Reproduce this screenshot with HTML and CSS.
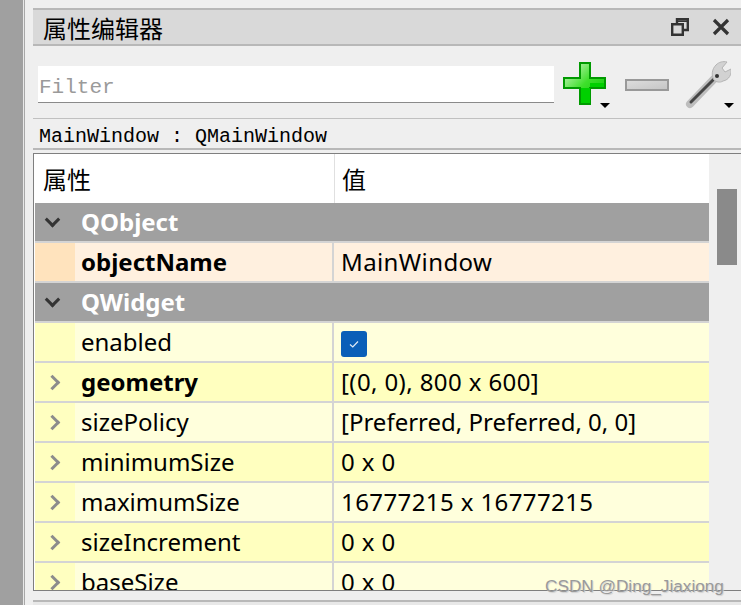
FILE: index.html
```html
<!DOCTYPE html>
<html lang="zh-CN">
<head>
    <meta charset="UTF-8">
    <title>属性编辑器</title>
    <link rel="stylesheet" href="styles.css">
</head>
<body>
  <div class="side-strip"></div>
  <div class="dock">
    <div class="title-bar">
        <span class="title-text">属性编辑器</span>
        <div class="title-buttons">
            <svg width="18" height="18" viewBox="0 0 18 18" fill="none" stroke="#333" stroke-width="2.4"><path d="M1.2 6.2h10.6v10.6H1.2z"/><path d="M6 6V1.2h10.8V12H12"/><path d="M6 3.2h10.8" stroke-width="1.6"/></svg>
            <svg width="18" height="18" viewBox="0 0 18 18" fill="none" stroke="#333" stroke-width="3.2"><path d="M2 2l14 14M16 2L2 16"/></svg>
        </div>
    </div>
    <div class="tool-row">
        <div class="filter">Filter</div>
        <div class="tool-buttons">
            <div class="tool-btn plus-btn">
                <svg width="46" height="46" viewBox="0 0 46 46">
                    <defs>
                        <linearGradient id="plusFill" x1="0" y1="0" x2="1" y2="1">
                            <stop offset="0" stop-color="#e2f8da"/>
                            <stop offset="0.5" stop-color="#3fe02c"/>
                            <stop offset="1" stop-color="#00c400"/>
                        </linearGradient>
                    </defs>
                    <path d="M17 1h10v15h15v10H27v16H17V26H1V16h16z" fill="url(#plusFill)" stroke="#009a00" stroke-width="2"/>
                    <path d="M27 21h14v4H27v16H18V26h9z" fill="#00d000"/>
                </svg>
                <span class="drop-arrow"></span>
            </div>
            <div class="tool-btn minus-btn">
                <svg width="44" height="12" viewBox="0 0 44 12">
                    <defs>
                        <linearGradient id="minusFill" x1="0" y1="0" x2="1" y2="1">
                            <stop offset="0" stop-color="#dedede"/>
                            <stop offset="1" stop-color="#c4c4c4"/>
                        </linearGradient>
                    </defs>
                    <rect x="1" y="1" width="42" height="10" fill="url(#minusFill)" stroke="#999" stroke-width="2"/>
                </svg>
            </div>
            <div class="tool-btn wrench-btn">
                <svg width="46" height="48" viewBox="0 0 46 48">
                    <path d="M5 43L29 18" stroke="#bdbdbd" stroke-width="8" stroke-linecap="round"/>
                    <path d="M6 41L29 18" stroke="#454545" stroke-width="3" stroke-linecap="round"/>
                    <path d="M31 4c3-3 7-4 11-3l-5 6 3 4 6-3c1 5-2 11-8 12-3 2-7 1-9-1-3-5-2-11 2-15z" fill="#d2d2d2" stroke="#b4b4b4"/>
                    <circle cx="32" cy="15" r="2" fill="#333"/>
                </svg>
                <span class="drop-arrow"></span>
            </div>
        </div>
    </div>
    <div class="object-label">MainWindow : QMainWindow</div>
    <div class="prop-area">
      <div class="prop-table">
        <div class="prop-head">
            <div class="head-name">属性</div>
            <div class="head-value">值</div>
        </div>
        <div class="group-row"><span class="chev-down"></span>QObject</div>
        <div class="row row-orange">
            <div class="indent"></div>
            <div class="name bold">objectName</div>
            <div class="value spaced">MainWindow</div>
        </div>
        <div class="group-row"><span class="chev-down"></span>QWidget</div>
        <div class="row row-light">
            <div class="indent"></div>
            <div class="name">enabled</div>
            <div class="value"><span class="checkbox"><svg width="12" height="12" viewBox="0 0 12 12" fill="none" stroke="#dfeaf6" stroke-width="1.2"><path d="M2 6.5l2.8 2.5L10 3.5"/></svg></span></div>
        </div>
        <div class="row row-dark">
            <div class="indent"><span class="chev-right"></span></div>
            <div class="name bold">geometry</div>
            <div class="value spaced">[(0, 0), 800 x 600]</div>
        </div>
        <div class="row row-light">
            <div class="indent"><span class="chev-right"></span></div>
            <div class="name">sizePolicy</div>
            <div class="value">[Preferred, Preferred, 0, 0]</div>
        </div>
        <div class="row row-dark">
            <div class="indent"><span class="chev-right"></span></div>
            <div class="name">minimumSize</div>
            <div class="value spaced">0 x 0</div>
        </div>
        <div class="row row-light">
            <div class="indent"><span class="chev-right"></span></div>
            <div class="name">maximumSize</div>
            <div class="value spaced">16777215 x 16777215</div>
        </div>
        <div class="row row-dark">
            <div class="indent"><span class="chev-right"></span></div>
            <div class="name">sizeIncrement</div>
            <div class="value spaced">0 x 0</div>
        </div>
        <div class="row row-light">
            <div class="indent"><span class="chev-right"></span></div>
            <div class="name">baseSize</div>
            <div class="value spaced">0 x 0</div>
        </div>
      </div>
      <div class="scrollbar"><div class="scroll-thumb"></div></div>
    </div>
    <div class="bottom-bar"></div>
  </div>
  <div class="watermark">CSDN @Ding_Jiaxiong</div>
</body>
</html>
```

FILE: styles.css
```css
html, body {
    height: 100%;
}
body {
    margin: 0;
    display: flex;
    overflow: hidden;
    background-color: #efefef;
    color: #000;
    font-family: "Noto Sans", "Noto Sans CJK SC", sans-serif;
    font-size: 24px;
}
.side-strip {
    width: 23px;
    flex-shrink: 0;
    background-color: #a0a0a0;
    border-right: 1px solid #e8e8e8;
    box-shadow: 1px 0 0 #a8a8a8;
}
.dock {
    flex: 1;
    display: flex;
    flex-direction: column;
    padding: 8px 0 0 9px;
    min-width: 0;
}
.title-bar {
    height: 34px;
    flex-shrink: 0;
    display: flex;
    align-items: center;
    justify-content: space-between;
    background-color: #d9d9d9;
    border-top: 2px solid #b8b8b8;
    border-bottom: 2px solid #b8b8b8;
    padding-left: 10px;
}
.title-text {
    font-family: "Noto Sans CJK SC", sans-serif;
    font-size: 24px;
}
.title-buttons {
    display: flex;
    gap: 23px;
    padding-right: 11px;
}
.tool-row {
    height: 73px;
    flex-shrink: 0;
    display: flex;
    align-items: center;
    padding: 5px 0 0 5px;
    border-bottom: 1px solid #c0c0c0;
    box-sizing: border-box;
}
.filter {
    width: 516px;
    height: 37px;
    box-sizing: border-box;
    background-color: #fff;
    border-bottom: 1px solid #8a8a8a;
    color: #9a9a9a;
    font-family: "Liberation Mono", monospace;
    font-size: 21px;
    line-height: 43px;
    padding-left: 1px;
}
.tool-buttons {
    display: flex;
    align-items: center;
    margin-left: 9px;
}
.tool-btn {
    position: relative;
    display: flex;
}
.minus-btn {
    margin: 0 16px;
}
.drop-arrow {
    position: absolute;
    right: -1px;
    bottom: 0;
    border-left: 5px solid transparent;
    border-right: 5px solid transparent;
    border-top: 5px solid #000;
}
.wrench-btn .drop-arrow {
    right: -3px;
    bottom: 1px;
}
.object-label {
    height: 31px;
    flex-shrink: 0;
    box-sizing: border-box;
    border-bottom: 2px solid #b8b8b8;
    font-family: "Liberation Mono", monospace;
    font-size: 20px;
    line-height: 35px;
    padding-left: 6px;
}
.prop-area {
    height: 438px;
    margin-top: 3px;
    flex-shrink: 0;
    display: flex;
    border-top: 1px solid #7f7f7f;
    border-bottom: 1px solid #7f7f7f;
    box-sizing: border-box;
    overflow: hidden;
}
.prop-table {
    width: 676px;
    flex-shrink: 0;
    box-sizing: border-box;
    border-left: 1px solid #7f7f7f;
    padding-left: 1px;
    background-color: #fff;
    overflow: hidden;
}
.prop-head {
    height: 49px;
    display: flex;
    font-family: "Noto Sans CJK SC", sans-serif;
    line-height: 50px;
}
.head-name {
    width: 300px;
    padding-left: 8px;
    box-sizing: border-box;
    border-right: 1px solid #e0e0e0;
}
.head-value {
    padding-left: 7px;
}
.group-row {
    height: 38px;
    display: flex;
    align-items: center;
    background-color: #a0a0a0;
    border-bottom: 2px solid #d4d4d4;
    color: #fff;
    font-weight: 700;
    line-height: 38px;
}
.chev-down, .chev-right {
    display: block;
    box-sizing: border-box;
    width: 11px;
    height: 11px;
}
.chev-down {
    border-right: 3px solid #333;
    border-bottom: 3px solid #333;
    transform: rotate(45deg) translate(-2px, -2px);
    margin: 0 23px 0 12px;
}
.chev-right {
    border-top: 3px solid #8c8c8c;
    border-right: 3px solid #8c8c8c;
    transform: rotate(45deg);
    margin-left: 12px;
}
.row {
    height: 38px;
    display: flex;
    border-bottom: 2px solid #d4d4d4;
    line-height: 38px;
}
.indent {
    width: 40px;
    flex-shrink: 0;
    display: flex;
    align-items: center;
}
.name {
    width: 259px;
    flex-shrink: 0;
    padding-left: 6px;
    box-sizing: border-box;
    border-right: 2px solid #d4d4d4;
}
.value {
    flex: 1;
    padding-left: 7px;
}
.spaced {
    letter-spacing: 0.4px;
}
.bold {
    font-weight: 700;
}
.row-orange {
    background-color: #fff0df;
}
.row-orange .indent {
    background-color: #ffe3bd;
}
.row-light {
    background-color: #ffffdc;
}
.row-light .indent {
    background-color: #ffffc0;
}
.row-dark, .row-dark .indent {
    background-color: #ffffbf;
}
.checkbox {
    display: inline-flex;
    align-items: center;
    justify-content: center;
    width: 26px;
    height: 26px;
    border-radius: 3px;
    background-color: #0a5fb8;
    vertical-align: middle;
    margin-top: -2px;
}
.scrollbar {
    flex: 1;
    padding: 35px 4px 0 8px;
}
.scroll-thumb {
    height: 76px;
    background-color: #8a8a8a;
}
.bottom-bar {
    flex: 1;
    margin-top: 9px;
    border-top: 2px solid #b8b8b8;
    background-color: #e8e8e8;
}
.watermark {
    position: absolute;
    left: 545px;
    top: 576px;
    color: #9a9a9a;
    font-family: "Liberation Sans", sans-serif;
    font-size: 17.2px;
    text-shadow: 1px 1px 1px #d0d0d0;
}
```
